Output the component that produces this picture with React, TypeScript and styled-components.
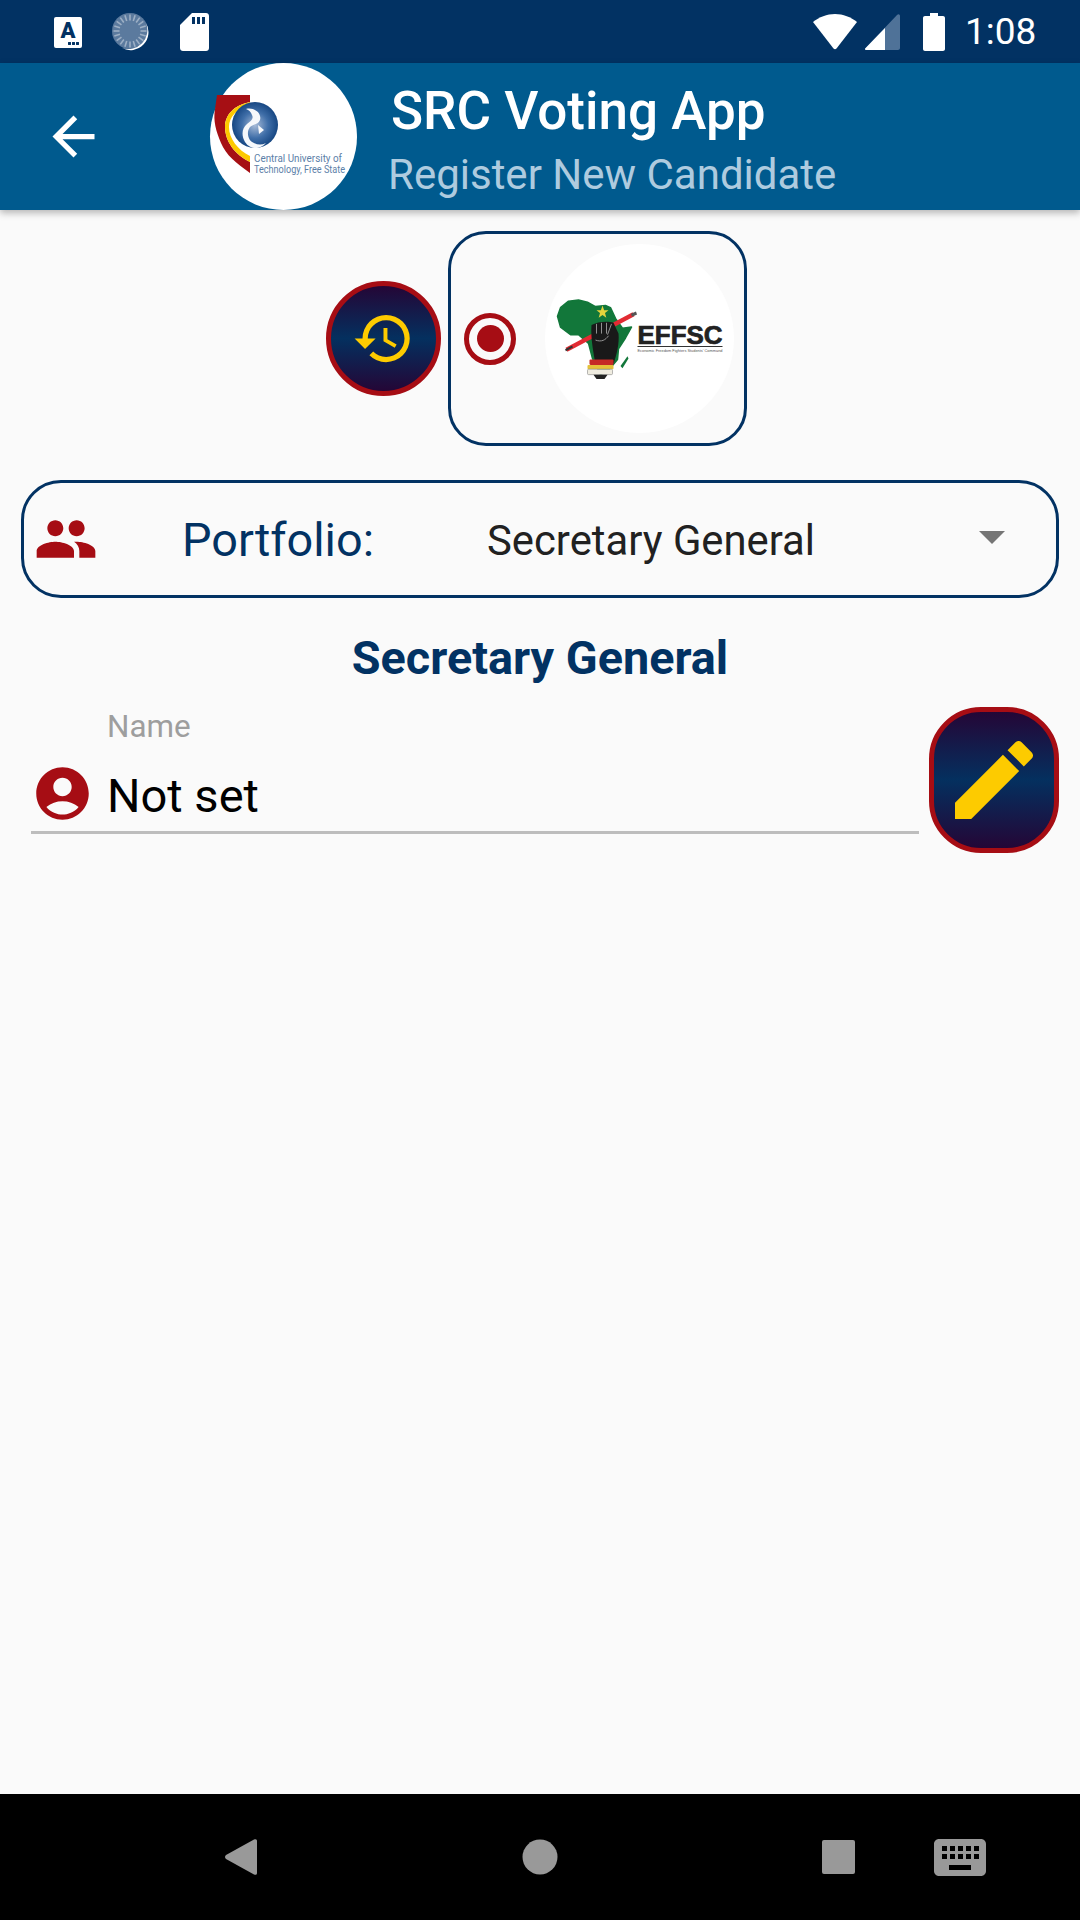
import React from "react";
import styled, { createGlobalStyle } from "styled-components";
import { MdArrowBack, MdHistory, MdPeople, MdAccountCircle, MdEdit } from "react-icons/md";

const Global = createGlobalStyle`
  html, body { margin: 0; padding: 0; background: #fafafa; }
  body { font-family: Roboto, "Liberation Sans", sans-serif; }
  * { box-sizing: border-box; }
`;

const navy = "#023263";
const crimson = "#a60d14";

const Page = styled.div`
  width: 1080px;
  height: 1920px;
  display: flex;
  flex-direction: column;
  overflow: hidden;
  background: #fafafa;
`;

const StatusBar = styled.div`
  height: 63px;
  flex: none;
  display: flex;
  align-items: center;
  padding: 0 43px 0 54px;
  background: ${navy};
  color: #fff;
`;
const StatusLeft = styled.div`
  display: flex;
  align-items: center;
  gap: 30px;
`;
const StatusRight = styled.div`
  margin-left: auto;
  display: flex;
  align-items: center;
`;
const StatusSvg = styled.svg<{ $ml?: number }>`
  display: block;
  margin-left: ${(p) => p.$ml ?? 0}px;
`;
const Clock = styled.span`
  margin-left: 20px;
  width: 72px;
  font-size: 37px;
  line-height: 63px;
  color: #fff;
  white-space: nowrap;
`;
const KeyTile = styled.div`
  position: relative;
  width: 28px;
  height: 31px;
  margin-top: 1px;
  border-radius: 2px;
  background: #fff;
  color: ${navy};
  font: 900 22px/28px Roboto, sans-serif;
  text-align: center;
`;
const TileDots = styled.span`
  position: absolute;
  right: 3px;
  bottom: 3px;
  width: 11px;
  height: 3px;
  background: radial-gradient(circle at 1.5px 1.5px, ${navy} 1.4px, transparent 1.6px) 0 0 / 4px 3px repeat-x;
`;

const Header = styled.header`
  position: relative;
  z-index: 2;
  flex: none;
  height: 147px;
  display: flex;
  align-items: center;
  background: #005a8e;
  box-shadow: 0 3px 7px rgba(0, 0, 0, 0.28);
  color: #fff;
`;
const BackIcon = styled(MdArrowBack)`
  flex: none;
  margin-left: 42px;
  font-size: 63px;
`;
const LogoDisc = styled.div`
  flex: none;
  width: 147px;
  height: 147px;
  margin-left: 105px;
  border-radius: 50%;
  background: #fff;
`;
const Titles = styled.div`
  margin-left: 32px;
  padding-top: 11px;
  display: flex;
  flex-direction: column;
`;
const Title = styled.div`
  margin: 0 0 0 2px;
  font-size: 53px;
  line-height: 65px;
  font-weight: 500;
  white-space: nowrap;
`;
const Subtitle = styled.div`
  margin-left: -1px;
  font-size: 42px;
  line-height: 62px;
  color: #aecbdf;
  white-space: nowrap;
`;

const Content = styled.main`
  flex: 1;
  display: flex;
  flex-direction: column;
  padding: 21px 21px 0 21px;
`;
const PickerRow = styled.div`
  display: flex;
  align-items: center;
  padding-left: 305px;
  gap: 7px;
`;
const GradientButton = styled.div<{ $round?: boolean }>`
  flex: none;
  display: flex;
  align-items: center;
  justify-content: center;
  color: #fdcb00;
  border: 5px solid ${crimson};
  background: linear-gradient(#240636, #04305f 50%, #240636);
  width: ${(p) => (p.$round ? "115px" : "130px")};
  height: ${(p) => (p.$round ? "115px" : "146px")};
  border-radius: ${(p) => (p.$round ? "50%" : "52px")};
`;
const LogoCard = styled.div`
  flex: none;
  width: 299px;
  height: 215px;
  display: flex;
  align-items: center;
  padding-left: 13px;
  border: 3px solid ${navy};
  border-radius: 38px;
`;
const Radio = styled.div`
  flex: none;
  width: 52px;
  height: 52px;
  display: flex;
  align-items: center;
  justify-content: center;
  border: 5px solid ${crimson};
  border-radius: 50%;
  &::after {
    content: "";
    width: 27px;
    height: 27px;
    border-radius: 50%;
    background: ${crimson};
  }
`;
const PartyDisc = styled.div`
  flex: none;
  width: 189px;
  height: 189px;
  margin-left: 29px;
  border-radius: 50%;
  background: #fff;
`;
const Select = styled.div`
  height: 118px;
  margin-top: 34px;
  display: flex;
  align-items: center;
  padding-left: 10px;
  border: 3px solid ${navy};
  border-radius: 40px;
  color: ${crimson};
`;
const SelectLabel = styled.span`
  margin-left: 84px;
  margin-top: 2px;
  width: 305px;
  font-size: 46.8px;
  color: ${navy};
  white-space: nowrap;
`;
const SelectValue = styled.span`
  margin-top: 2px;
  font-size: 41.8px;
  color: #212121;
  white-space: nowrap;
`;
const Caret = styled.span`
  margin-left: auto;
  margin-right: 51px;
  margin-top: -4px;
  width: 0;
  height: 0;
  border-left: 13px solid transparent;
  border-right: 13px solid transparent;
  border-top: 13px solid #757575;
`;
const Heading = styled.h2`
  margin: 30px 0 0;
  font-size: 46.8px;
  line-height: 60px;
  font-weight: 700;
  text-align: center;
  color: ${navy};
`;
const NameRow = styled.div`
  margin-top: 19px;
  display: flex;
  align-items: flex-start;
  gap: 10px;
`;
const Field = styled.div`
  flex: 1;
  height: 127px;
  margin-left: 10px;
  border-bottom: 3px solid #bdbdbd;
`;
const FieldLabel = styled.div`
  padding-left: 76px;
  font-size: 31.4px;
  line-height: 40px;
  color: #9e9e9e;
`;
const FieldValue = styled.div`
  height: 66px;
  margin-top: 15px;
  display: flex;
  align-items: center;
  color: ${crimson};
`;
const PersonIcon = styled(MdAccountCircle)`
  flex: none;
  margin-top: -3px;
  font-size: 63px;
`;
const FieldText = styled.span`
  margin-left: 13px;
  font-size: 47px;
  color: #000;
`;

const NavBar = styled.nav`
  position: relative;
  flex: none;
  height: 126px;
  background: #000;
  display: flex;
  align-items: center;
`;
const NavSlot = styled.svg<{ $ml: number }>`
  display: block;
  flex: none;
  margin-left: ${(p) => p.$ml}px;
  fill: #999;
`;

const CutLogo = () => (
  <svg width="147" height="147" viewBox="0 0 147 147">
    <defs>
      <radialGradient id="globe" cx="50%" cy="50%" r="52%">
        <stop offset="0" stopColor="#a9bcd8" />
        <stop offset="0.55" stopColor="#3f6ea8" />
        <stop offset="1" stopColor="#13437f" />
      </radialGradient>
    </defs>
    <path d="M7 32H40V39C24 42 15 52 15 64C15 78 25 92 40 99V110C26 100 16 92 11 80C6 68 3 58 5 46Z" fill="#a60f14" />
    <path d="M40 39C24 42 15 52 15 64C15 78 25 92 40 99V93C28 87 19 76 19 64C19 54 27 45 40 43Z" fill="#fdc900" />
    <circle cx="45" cy="62" r="23" fill="url(#globe)" />
    <path d="M36 46C44 44 52 50 50 57C48 62 43 61 40 64C36 69 38 78 44 80C48 82 52 82 56 80C50 87 40 87 35 79C31 72 32 65 37 61C41 58 44 56 42 52C41 49 39 47 36 46Z" fill="#f6f8fb" />
    <path d="M48 62L54 67L49 71Z" fill="#f6f8fb" />
    <text x="44" y="99" fontFamily="Roboto, sans-serif" fontSize="11" fill="#5c80a8" textLength="88" lengthAdjust="spacingAndGlyphs">Central University of</text>
    <text x="44" y="110" fontFamily="Roboto, sans-serif" fontSize="11" fill="#5c80a8" textLength="91" lengthAdjust="spacingAndGlyphs">Technology, Free State</text>
  </svg>
);

const EffLogo = () => (
  <svg width="189" height="189" viewBox="0 0 188 189">
    <g transform="translate(0 -7.6) scale(1 1.08)">
      <path d="M12 74L15 66L23 60L33 59L42 61L50 65L60 64L65 66L70 76L77 85L86 84L80 94L73 104L72 114L63 124L55 128L47 113L43 99L33 91L25 91L15 84Z" fill="#12773a" stroke="#12773a" strokeWidth="1.5" strokeLinejoin="round" />
      <path d="M82 111L83 113L77 122L75 120Z" fill="#12773a" />
      <path d="M57 64L58.6 68.4H63L59.5 71L60.8 75.4L57 72.8L53.2 75.4L54.5 71L51 68.4H55.4Z" fill="#e6d43c" />
      <path d="M21 105L88 72" stroke="#e22b33" strokeWidth="4.2" />
      <path d="M20 105.5L27 102" stroke="#333" strokeWidth="2" />
      <path d="M86 73L91 71" stroke="#555" strokeWidth="3" />
      <path d="M46 82C52 79 62 78 68 80L73 90C74 100 71 110 68 118H50C48 108 45 94 46 82Z" fill="#191919" />
      <path d="M51 81V90M56 80V90M61 80V90M66 81L62 91M50 96C56 98 60 96 63 92" stroke="#9a9a9a" strokeWidth="0.9" fill="none" />
      <rect x="44" y="114" width="24" height="5" fill="#c52a26" rx="1" />
      <rect x="42" y="119" width="26" height="4" fill="#e5c23a" rx="1" />
      <rect x="42" y="123" width="25" height="5" fill="#efece0" stroke="#777" strokeWidth="0.5" rx="1" />
      <path d="M48 128H62L59 132H51Z" fill="#222" />
    </g>
    <text x="92" y="100" fontFamily="Liberation Sans, sans-serif" fontWeight="700" fontSize="25" fill="#222" stroke="#222" strokeWidth="0.7" textLength="85" lengthAdjust="spacingAndGlyphs">EFFSC</text>
    <rect x="92" y="102" width="85" height="1" fill="#333" />
    <text x="92" y="108" fontFamily="Liberation Sans, sans-serif" fontSize="4" fill="#555" textLength="85" lengthAdjust="spacingAndGlyphs">Economic Freedom Fighters Students' Command</text>
  </svg>
);

const ticks = Array.from({ length: 20 }, (_, i) => i * 18);

export default function App() {
  return (
    <Page>
      <Global />
      <StatusBar>
        <StatusLeft>
          <KeyTile>
            A<TileDots />
          </KeyTile>
          <StatusSvg width="38" height="38" viewBox="0 0 38 38">
            <circle cx="18" cy="18" r="18" fill="#5b7a9e" />
            {ticks.map((a) => (
              <rect key={a} x="17.2" y="1.5" width="1.6" height="6" fill="#fff" fillOpacity="0.4" transform={`rotate(${a} 18 18)`} />
            ))}
            <path d="M34 10A18 18 0 0 1 10 35A19 19 0 0 0 34 10Z" fill="#fff" />
          </StatusSvg>
          <StatusSvg width="29" height="38" viewBox="0 0 29 38">
            <path d="M12 0H26C27.7 0 29 1.3 29 3V35C29 36.7 27.7 38 26 38H3C1.3 38 0 36.7 0 35V12Z" fill="#fff" />
            <path d="M12 4H15V11H12ZM17 4H20V11H17ZM22 4H25V11H22Z" fill={navy} />
          </StatusSvg>
        </StatusLeft>
        <StatusRight>
          <StatusSvg width="44" height="36" viewBox="0 0 44 36">
            <path d="M22 0C30 0 38 3 44 8L23.5 34.6C22.7 35.6 21.3 35.6 20.5 34.6L0 8C6 3 14 0 22 0Z" fill="#fff" />
          </StatusSvg>
          <StatusSvg $ml={8} width="35" height="36" viewBox="0 0 35 36">
            <path d="M35 2V34C35 35 34 36 33 36H1C0 36 -0.4 35 0.4 34.2L32 1C33.5 -0.5 35 0.5 35 2Z" fill="#4f7298" />
            <path d="M20 14V36H1C0 36 -0.4 35 0.4 34.2Z" fill="#fff" />
          </StatusSvg>
          <StatusSvg $ml={23} width="22" height="38" viewBox="0 0 22 38">
            <path d="M7 0H15V3H20C21.1 3 22 3.9 22 5V36C22 37.1 21.1 38 20 38H2C0.9 38 0 37.1 0 36V5C0 3.9 0.9 3 2 3H7Z" fill="#fff" />
          </StatusSvg>
          <Clock>1:08</Clock>
        </StatusRight>
      </StatusBar>

      <Header>
        <BackIcon />
        <LogoDisc>
          <CutLogo />
        </LogoDisc>
        <Titles>
          <Title>SRC Voting App</Title>
          <Subtitle>Register New Candidate</Subtitle>
        </Titles>
      </Header>

      <Content>
        <PickerRow>
          <GradientButton $round>
            <MdHistory size={63} />
          </GradientButton>
          <LogoCard>
            <Radio />
            <PartyDisc>
              <EffLogo />
            </PartyDisc>
          </LogoCard>
        </PickerRow>

        <Select>
          <MdPeople size={64} />
          <SelectLabel>Portfolio:</SelectLabel>
          <SelectValue>Secretary General</SelectValue>
          <Caret />
        </Select>

        <Heading>Secretary General</Heading>

        <NameRow>
          <Field>
            <FieldLabel>Name</FieldLabel>
            <FieldValue>
              <PersonIcon />
              <FieldText>Not set</FieldText>
            </FieldValue>
          </Field>
          <GradientButton>
            <MdEdit size={104} />
          </GradientButton>
        </NameRow>
      </Content>

      <NavBar>
        <NavSlot $ml={225} width="33" height="36" viewBox="0 0 33 36">
          <path d="M1 16L29 0.6C31 -0.4 32 0.6 32 2V34C32 35.4 31 36.4 29 35.4L1 20C-0.3 19 -0.3 17 1 16Z" />
        </NavSlot>
        <NavSlot $ml={264} width="36" height="36" viewBox="0 0 36 36">
          <circle cx="18" cy="18" r="17.5" />
        </NavSlot>
        <NavSlot $ml={264} width="33" height="34" viewBox="0 0 33 34">
          <rect width="33" height="34" rx="2" />
        </NavSlot>
        <NavSlot $ml={79} width="52" height="37" viewBox="0 0 52 37">
          <path fillRule="evenodd" d="M5 0H47C49.8 0 52 2.2 52 5V32C52 34.8 49.8 37 47 37H5C2.2 37 0 34.8 0 32V5C0 2.2 2.2 0 5 0ZM8 7V12H13V7ZM16 7V12H21V7ZM24 7V12H29V7ZM32 7V12H37V7ZM40 7V12H45V7ZM8 15V20H13V15ZM16 15V20H21V15ZM24 15V20H29V15ZM32 15V20H37V15ZM40 15V20H45V15ZM15 26V31H37V26Z" />
        </NavSlot>
      </NavBar>
    </Page>
  );
}
